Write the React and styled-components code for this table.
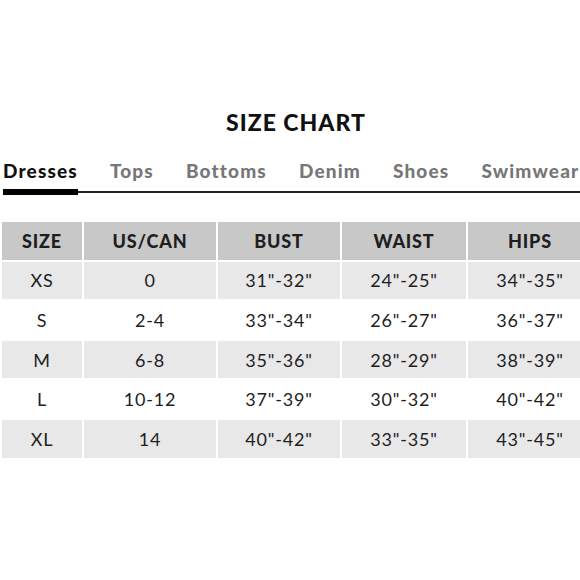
import React from 'react'
import styled, { createGlobalStyle } from 'styled-components'

const Global = createGlobalStyle`
    html, body { margin:0; padding:0; background:#fff; overflow:hidden; }
    body { width:580px; height:580px; font-family: Lato, "Liberation Sans", sans-serif; color:#1e1e1e; }
`

const Page = styled.div`
    width:580px;
    height:580px;
    overflow:hidden;
    padding-top:107px;
    box-sizing:border-box;
`

const Title = styled.h1`
    margin:0 0 21px 0;
    text-align:center;
    font-size:23px;
    font-weight:900;
    letter-spacing:1px;
    line-height:30px;
    padding-left:12px;
    color:#111;
`

const TabBar = styled.div`
    display:flex;
    gap:32px;
    margin-left:3px;
    border-bottom:2px solid #222;
    width:max-content;
    min-width:600px;
    white-space:nowrap;
`

const Tab = styled.div`
    position:relative;
    font-size:19px;
    font-weight:900;
    letter-spacing:1.15px;
    line-height:26px;
    padding-bottom:7px;
    color:${p => p.active ? '#111' : '#777'};
    &::after{
        content:'';
        display:${p => p.active ? 'block' : 'none'};
        position:absolute;
        left:0; right:0; bottom:-4px;
        height:6px;
        background:#000;
    }
`

const Table = styled.div`
    display:grid;
    grid-template-columns:80px 132px 122px 124px 124px;
    grid-auto-rows:37.6px;
    gap:2px;
    margin:29px 0 0 2px;
    width:max-content;
`

const Cell = styled.div`
    display:flex;
    align-items:center;
    justify-content:center;
    font-size:18px;
    letter-spacing:.8px;
    font-weight:${p => p.head ? 900 : 400};
    background:${p => p.head ? '#c8c8c8' : p.shade ? '#e8e8e8' : '#fff'};
    color:#1e1e1e;
`

const tabs = ['Dresses', 'Tops', 'Bottoms', 'Denim', 'Shoes', 'Swimwear']
const heads = ['SIZE', 'US/CAN', 'BUST', 'WAIST', 'HIPS']
const rows = [
    ['XS', '0', '31"-32"', '24"-25"', '34"-35"'],
    ['S', '2-4', '33"-34"', '26"-27"', '36"-37"'],
    ['M', '6-8', '35"-36"', '28"-29"', '38"-39"'],
    ['L', '10-12', '37"-39"', '30"-32"', '40"-42"'],
    ['XL', '14', '40"-42"', '33"-35"', '43"-45"'],
]

function App() {
    return (
        <Page>
            <Global />
            <Title>SIZE CHART</Title>
            <TabBar>
                {tabs.map((t, i) => <Tab key={t} active={i === 0}>{t}</Tab>)}
            </TabBar>
            <Table>
                {heads.map(h => <Cell key={h} head>{h}</Cell>)}
                {rows.map((r, i) => r.map((v, j) => <Cell key={i + '-' + j} shade={i % 2 === 0}>{v}</Cell>))}
            </Table>
        </Page>
    )
}

export default App
